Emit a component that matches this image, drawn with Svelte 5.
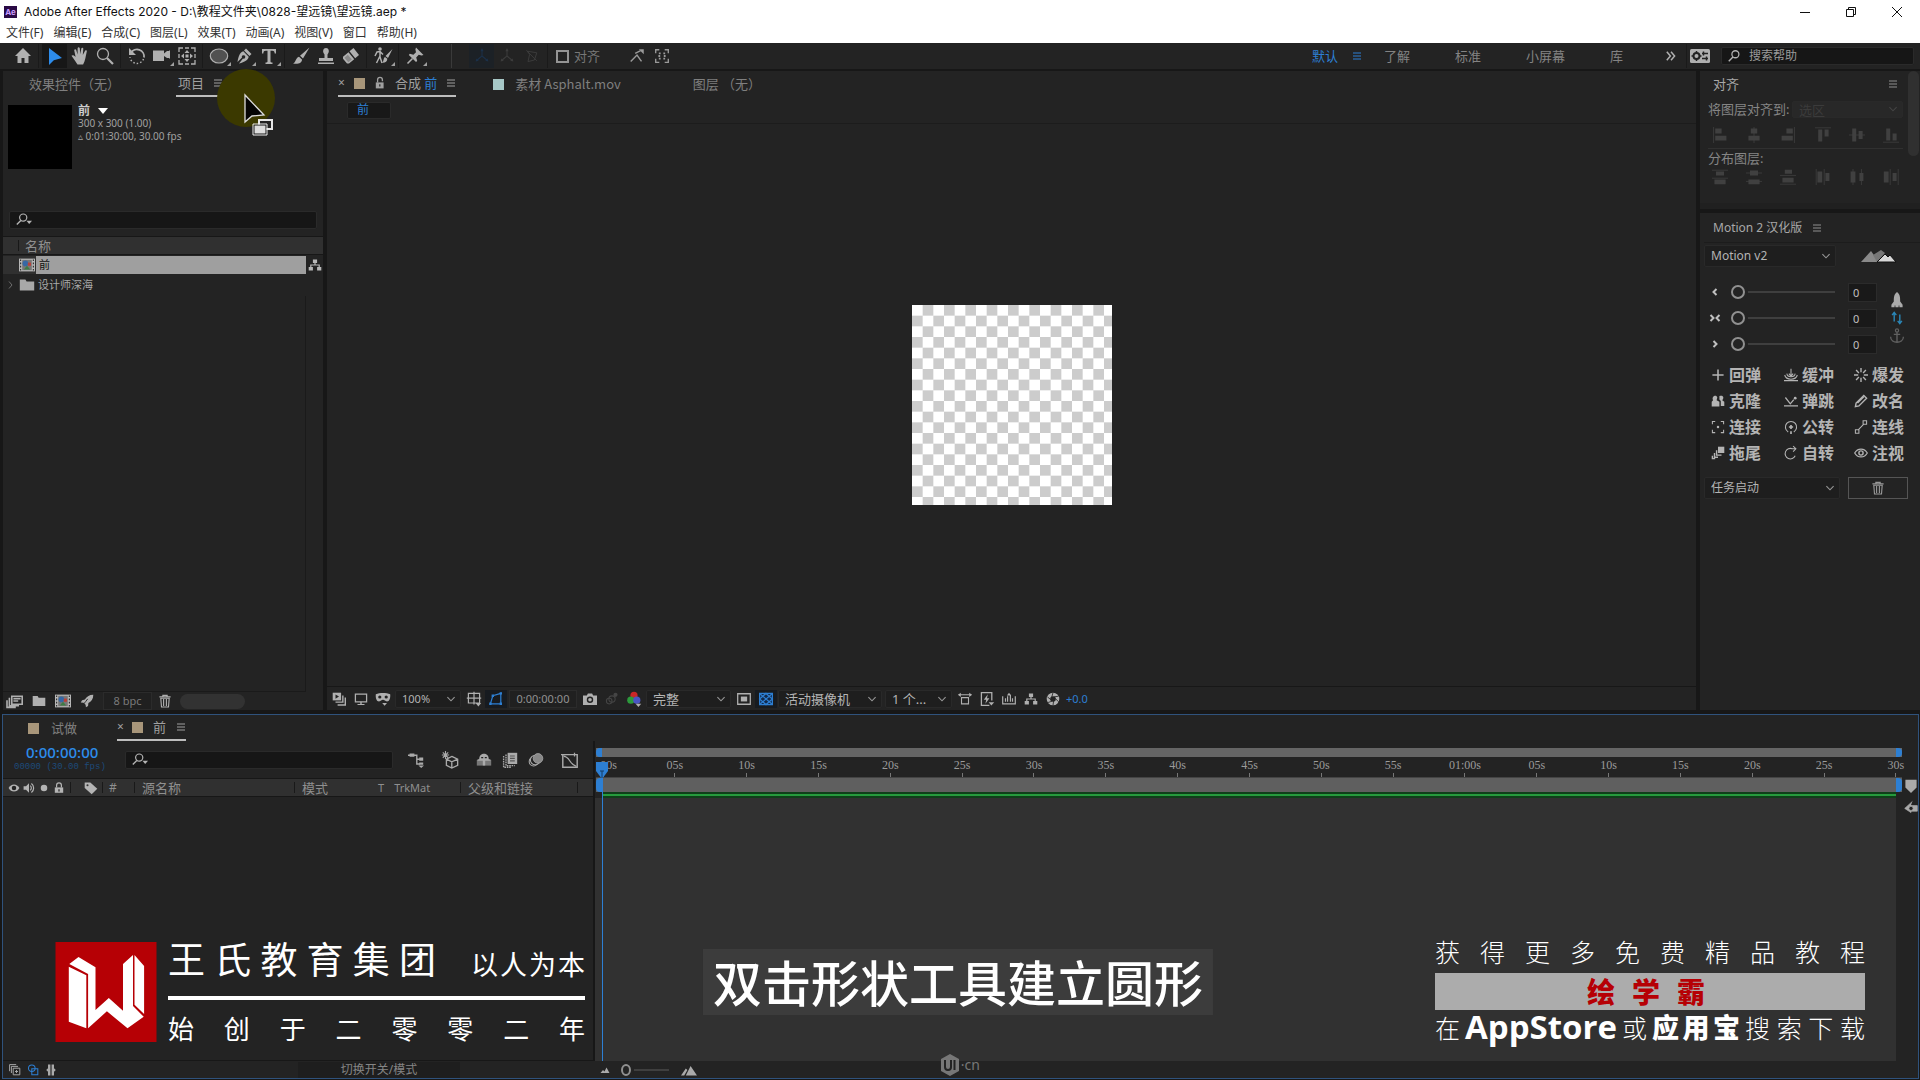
<script>
  const icons = {
    home: '<path d="M10 2 2 10h2.500v7h4v-5h3v5h4v-7H18z" fill="currentColor"/>',
    arrow: '<path d="M4 2v17l4.800-4.800L17 12z" fill="currentColor"/>',
    hand: '<path d="M7.500 18.500C5.500 15.500 3.500 12.500 1.500 9.800c.8-1.200 2.500-.8 4.100 1.200L4.200 4.200c.2-1.300 1.700-1.200 2-.1l1.400 4.500V2.200c.2-1.300 1.900-1.300 2.200 0l.5 6 1-5.800c.4-1.200 2-.9 2 .3l-.5 6.300 2.300-4.200c.7-.9 2-.3 1.700.8-.9 3.400-1.500 9.500-3.700 12.900z" fill="currentColor"/>',
    zoom: '<circle cx="8" cy="8" r="5.500" fill="none" stroke="currentColor" stroke-width="1.300"/><path d="m12 12 6 6" stroke="currentColor" stroke-width="2.200"/>',
    rotate: '<path d="M4 7a7 7 0 0 1 13 4.500" fill="none" stroke="currentColor" stroke-width="1.800"/><path d="M2 2v7h7z" fill="currentColor"/><path d="M16.500 13A7 7 0 0 1 3 11" fill="none" stroke="currentColor" stroke-width="1.400" stroke-dasharray="1.500 2"/>',
    camera: '<path d="M1 4.500h11v3l3-2.500h2l1-1v9l-1-1h-2l-3-2v5H1z" fill="currentColor"/>',
    pan: '<path d="M2 6V2h4M8 2h4M14 2h4v4M2 8v4M18 8v4M2 14v4h4M8 18h4M14 18h4v-4" fill="none" stroke="currentColor" stroke-width="1.300"/><path d="m10 4 2.500 3h-5zM10 16l2.500-3h-5zM4 10l3-2.500v5zM16 10l-3-2.500v5zM8.500 8.500h3v3h-3z" fill="currentColor"/>',
    ellipse: '<ellipse cx="10" cy="10" rx="8.700" ry="7" fill="#515151" stroke="currentColor" stroke-width="1.200"/>',
    pen: '<path d="M12 2.500 17.500 8l-2 2-5.500-5.500zM9.300 5.300l5.400 5.400c-.7 3.300-3.700 5.300-9.700 6.800L9 12.500a1.700 1.700 0 1 0-1-1L3.500 16c1-6 2.500-9.500 5.800-10.700z" fill="currentColor"/>',
    type: '<path d="M3 3h14v4.500h-1.300c-.2-2-.8-2.700-2.500-2.700h-1.700v10.700c0 .8.700 1 2 1V18h-7v-1.500c1.300 0 2-.2 2-1V4.800H6.800c-1.700 0-2.300.7-2.500 2.700H3z" fill="currentColor"/>',
    brush: '<path d="M18.500 1.500 12 12.500 9 9.800zM8 10.800l3 2.700c.2 3.500-4 5-9 4 3-.7 2.300-5.500 6-6.700z" fill="currentColor"/>',
    stamp: '<path d="M8.500 8.500C6 5.500 7.200 2 10 2s4 3.500 1.500 6.500V12H17v3H3v-3h5.500zM2 16.500h16V18H2z" fill="currentColor"/>',
    eraser: '<path d="M12.500 2 18 9l-3.800 3.300-5.700-7zM7.500 6.200l5.700 7L8 17.500H6L2 12.800v-2z" fill="currentColor"/><path d="m3.500 11.800 3.800 4.500 3.500-2.900-4-4.700z" fill="#888"/>',
    roto: '<circle cx="7" cy="3" r="1.800" fill="currentColor"/><path d="M7 5v6l2 6M7 10l-3.500 7M2 10l2-4 3-.5 3 3" fill="none" stroke="currentColor" stroke-width="1.500"/><path d="M19.500 3 15 12l-2.500-2zM12 11l2.300 1.800c0 3-2 4.200-5.300 4 2-1 1-4.500 3-5.800z" fill="currentColor"/>',
    pin: '<path d="m11 1.500 7.500 7.500-2 .6-2.800-.8-2.500 2.600 1 3.600-1.200 1L3.800 9l1-1.200 3.600 1L11 6.200l-.6-2.800z" fill="currentColor"/><path d="m7.500 12.500-5 5" stroke="currentColor" stroke-width="1.600"/>',
    axis: '<path d="M10 2v8l-6 5M10 10l6 5" fill="none" stroke="currentColor" stroke-width="1.300"/><path d="m10 0 2 4H8zM2 17l1-4 3 3zM18 17l-1-4-3 3z" fill="currentColor"/>',
    axis3: '<path d="m4 4 12 2-3 9-8 2 2-9zM3 3l13 13" fill="none" stroke="currentColor" stroke-width="1.200"/>',
    snap: '<path d="m3 16 7-7 5 7M8 7l6-3" fill="none" stroke="currentColor" stroke-width="1.600"/><path d="M12 2.500h5.500V8z" fill="currentColor"/>',
    snapbox: '<path d="M3 7V3h4M13 3h4v4M3 13v4h4M13 17h4v-4" fill="none" stroke="currentColor" stroke-width="1.500"/><path d="M6.500 6h2v2h-2zm5 0h2v2h-2zM6.500 12h2v2h-2zm5 0h2v2h-2zM6 9h2v2H6zm6 0h2v2h-2z" fill="currentColor"/>',
    menu: '<path d="M2 4h16M2 10h16M2 16h16" stroke="currentColor" stroke-width="2.200"/>',
    more: '<path d="m3 3 6 7-6 7M10 3l6 7-6 7" fill="none" stroke="currentColor" stroke-width="2.500"/>',
    workspace: '<rect x="0" y="3" width="20" height="14" rx="1.500" fill="currentColor"/><circle cx="6.500" cy="10" r="3" fill="none" stroke="#232323" stroke-width="2"/><path d="M6.500 5v2M6.500 13v2M1.500 10h2M9.500 10h2M12 7.500h6M12 12.500h6" stroke="#232323" stroke-width="1.500"/><path d="M13.500 5.500v4M16.500 10.500v4" stroke="#232323" stroke-width="1.500"/>',
    find: '<circle cx="12" cy="7.500" r="5" fill="none" stroke="currentColor" stroke-width="1.800"/><path d="m8.500 11.500-6 6" stroke="currentColor" stroke-width="2"/>',
    findDrop: '<circle cx="9" cy="7" r="4.500" fill="none" stroke="currentColor" stroke-width="1.500"/><path d="m6 10.500-5 5" stroke="currentColor" stroke-width="1.800"/><path d="M13 11h7l-3.500 4z" fill="currentColor"/>',
    lock: '<path d="M3 9h13v10H3z" fill="currentColor"/><path d="M6 9V4.500a4 4 0 0 1 8 0V7" fill="none" stroke="currentColor" stroke-width="2.200"/><path d="M8.700 12h2v4h-2z" fill="#232323"/>',
    locked: '<path d="M3 9h14v9H3z" fill="currentColor"/><path d="M6 9V5.500a4 4 0 0 1 8 0V9" fill="none" stroke="currentColor" stroke-width="2"/><path d="M9 12h2v4H9z" fill="#232323"/>',
    comp: '<path d="M0 2h20v16H0z" fill="#b7b7b7"/><path d="M2 3v14M18 3v14" stroke="#333" stroke-width="1.500" stroke-dasharray="2 2"/><path d="M4 3.500h12v13H4z" fill="#777"/><circle cx="8" cy="8" r="3.500" fill="#3668a5"/><path d="M11 7h4v4h-4z" fill="#b8403a"/><path d="m10 11 4 4.500H6z" fill="#3d7c45"/>',
    folder: '<path d="M1 3h7l1.500 2.500H19V17H1z" fill="currentColor"/>',
    tree: '<path d="M7 2h6v5H7zM1 13h6v5H1zM13 13h6v5h-6z" fill="currentColor"/><path d="M10 6v4M4 14v-4h12v4" fill="none" stroke="currentColor" stroke-width="1.700"/>',
    chev: '<path d="m4 7 6 6 6-6" fill="none" stroke="currentColor" stroke-width="1.800"/>',
    chevR: '<path d="m6 3 6 7-6 7" fill="none" stroke="currentColor" stroke-width="1.800"/>',
    interpret: '<path d="M6 4h13v10H6z" fill="none" stroke="currentColor" stroke-width="2"/><path d="M3 6v10h12M0 9v9h11" fill="none" stroke="currentColor" stroke-width="2"/><path d="M8 7h9M8 10h6" stroke="currentColor" stroke-width="2"/>',
    rocket: '<path d="M19 1c-6 0-10 3-12 7l-4 1-2 3 4 .5 3 3L8.500 19l3-2 .5-4c4-2 7-6 7-12z" fill="currentColor"/><path d="m2 18 6-7 3-4" stroke="#232323" fill="none" stroke-width="1.300"/>',
    trash: '<path d="M2 4h16M7 4V2h6v2" fill="none" stroke="currentColor" stroke-width="1.800"/><path d="M4 6h12l-1 12.500H5zM8 7v10M12 7v10" fill="none" stroke="currentColor" stroke-width="1.600"/>',
    play: '<path d="M1 1h12v11H1z" fill="currentColor"/><path d="M5 3.500v6l5-3z" fill="#232323"/><path d="M15.500 5v9.500H5M19 8v10.500H8" fill="none" stroke="currentColor" stroke-width="2"/>',
    monitor: '<path d="M2 3h16v11H2z" fill="none" stroke="currentColor" stroke-width="1.800"/><path d="M9 14h2v3h4v1.500H5V17h4z" fill="currentColor"/>',
    mask: '<path d="M1 4c5-2 13-2 18 0 .5 5-1 9-4 9-2.500 0-3-2-5-2s-2.500 2-5 2c-3 0-4.500-4-4-9z" fill="currentColor"/><circle cx="6" cy="7.500" r="2" fill="#232323"/><circle cx="14" cy="7.500" r="2" fill="#232323"/><path d="M9 15h6l-3 3.500z" fill="currentColor"/>',
    grid: '<path d="M3 3h14v12H3zM10 1v16M1 9h18" fill="none" stroke="currentColor" stroke-width="1.500"/><path d="M12 15h7l-3.500 4.500z" fill="currentColor"/>',
    shape: '<path d="M3 16 6 6l10-3v13z" fill="none" stroke="currentColor" stroke-width="1.500"/><path d="M1.500 14.500h3v3h-3zM4.500 4.500h3v3h-3zM14.500 1.500h3v3h-3zM14.500 14.500h3v3h-3z" fill="currentColor"/>',
    photo: '<path d="M0 5h5.500L7 2h6l1.500 3H20v13.500H0z" fill="currentColor"/><circle cx="10" cy="11" r="3.600" fill="none" stroke="#232323" stroke-width="2"/>',
    rings: '<circle cx="6" cy="13" r="4" fill="none" stroke="currentColor" stroke-width="1.500"/><circle cx="10" cy="10" r="4.500" fill="none" stroke="currentColor" stroke-width="1.500"/><circle cx="15" cy="4" r="3" fill="currentColor"/>',
    rgb: '<circle cx="10" cy="5.500" r="4.500" fill="#c92727"/><circle cx="6" cy="11.500" r="4.500" fill="#2c9a3c"/><circle cx="13.500" cy="11.500" r="4.500" fill="#4a55c4"/><path d="M12 16h7l-3.500 4z" fill="#b0b0b0"/>',
    roi: '<path d="M1 2.500h18v15H1z" fill="none" stroke="currentColor" stroke-width="1.800"/><path d="M5.500 6.500h9v7h-9z" fill="currentColor"/>',
    alpha: '<path d="M2 3h16v14H2z" fill="#12294a" stroke="currentColor" stroke-width="1.500"/><path d="m2 3 16 14M18 3 2 17M10 3l8 7-8 7-8-7z" fill="none" stroke="currentColor" stroke-width="1.600"/>',
    aspect: '<path d="M1 4h18M5 8h10v9H5z" fill="none" stroke="currentColor" stroke-width="1.600"/><path d="m0 4 4-3v6zM20 4l-4-3v6z" fill="currentColor"/>',
    fast: '<path d="M16 12V2H3v16h10" fill="none" stroke="currentColor" stroke-width="1.600"/><path d="m11 4-5 7h3l-1 5 5-7h-3zM12 14h7l-3.500 4z" fill="currentColor"/>',
    chart: '<path d="M1 6v11h18V6M5 9v5M8 6v8M12 4v10M15 9v5" fill="none" stroke="currentColor" stroke-width="1.700"/><path d="m10 1 3 4H7z" fill="currentColor"/>',
    aperture: '<circle cx="10" cy="10" r="6.500" fill="none" stroke="currentColor" stroke-width="5"/><path d="M10 1 8 8M18 6l-7 1M18 14l-5-5M10 19l1-7M3 15l6-2M2 7l5 4" stroke="#232323" stroke-width="1.200"/>',
    flow: '<path d="M0 4h7M7 4h4v11h4M11 9h4" fill="none" stroke="currentColor" stroke-width="1.700"/><path d="M2 2h6v4H2zM14 7h5v4h-5zM14 13h5v3h-5zM13 17h7l-3.500 3z" fill="currentColor"/>',
    cube: '<path d="m12 6 6.500 3v7L12 19l-6-3V9zM6 9l6 3 6.500-3M12 12v7" fill="none" stroke="currentColor" stroke-width="1.500"/><path d="M5 0v9M1 4.500h8M2 1.500l6 6M8 1.500l-6 6" stroke="currentColor" stroke-width="1.200"/>',
    shy: '<path d="M1 10h18v7H1z" fill="#777"/><path d="M4 9c0-9 12-9 12 0h2v2H2V9zM8.500 10h3v7h-3z" fill="currentColor"/><path d="M6.500 7h2.500M11 7h2.500" stroke="#232323" stroke-width="1.500"/>',
    blend: '<path d="M7 1h12v14H7z" fill="currentColor"/><path d="M10 5h6M10 8h6M10 11h6" stroke="#555" stroke-width="1.500"/><path d="M5 3v14h11M2 5v14h10" fill="none" stroke="currentColor" stroke-width="1.700" stroke-dasharray="2 1"/>',
    blur: '<circle cx="7" cy="12" r="5.500" fill="none" stroke="currentColor" stroke-width="1.300"/><circle cx="9" cy="10" r="6" fill="#232323" stroke="currentColor" stroke-width="1.300"/><circle cx="12.500" cy="8" r="6" fill="#888" stroke="currentColor"/>',
    graph: '<path d="M2 4h16v14H2z" fill="none" stroke="currentColor" stroke-width="1.600"/><path d="M3 6c7 0 6 9 14 11M0 4h5M15 2v4" fill="none" stroke="currentColor" stroke-width="1.400"/>',
    eye: '<path d="M1 10c4-8 14-8 18 0-4 8-14 8-18 0z" fill="currentColor"/><circle cx="10" cy="10" r="3.800" fill="#232323"/>',
    speaker: '<path d="M1 7h4l5-5v16l-5-5H1z" fill="currentColor"/><path d="M12 6c2.500 2 2.500 6 0 8M14 2.500c5 4 5 11 0 15" fill="none" stroke="currentColor" stroke-width="2"/>',
    dot: '<circle cx="10" cy="10" r="6.500" fill="currentColor"/>',
    tag: '<path d="M1 2h8l10 9-8 8L1 10z" fill="currentColor"/><circle cx="5" cy="6" r="1.500" fill="#333"/>',
    switches: '<path d="M7 7h11v11H7z" fill="none" stroke="currentColor" stroke-width="1.600"/><path d="M4 15V4h11M1 12V1h11M12.500 10v5M10 12.500h5" fill="none" stroke="currentColor" stroke-width="1.600"/>',
    modes: '<circle cx="8" cy="7" r="5.500" fill="none" stroke="currentColor" stroke-width="1.700"/><path d="M8 8h10v10H8z" fill="none" stroke="currentColor" stroke-width="1.700"/>',
    braces: '<path d="M9 1H5v6l-3 3 3 3v6h4zM11 1h4v6l3 3-3 3v6h-4z" fill="currentColor"/>',
    mount: '<path d="m1 16 5-6 3 3 4-8 6 11z" fill="currentColor"/>',
    mountBig: '<path d="m0 17 6-9 2 2-4 7zM6 17 12 5l8 12z" fill="currentColor"/>',
    marker: '<path d="M2 1h16v11l-8 8-8-8z" fill="currentColor"/>',
    tri: '<path d="M12 2 1 12l9 6V7M10 8h9v8h-9z" fill="currentColor" stroke="currentColor"/><circle cx="10" cy="12" r="3" fill="#232323" stroke="currentColor"/>',
    lt: '<path d="m13 4-6 6 6 6" fill="none" stroke="currentColor" stroke-width="4"/>',
    ltgt: '<path d="m1 4 6 6-6 6M19 4l-6 6 6 6" fill="none" stroke="currentColor" stroke-width="4"/>',
    gt: '<path d="m7 4 6 6-6 6" fill="none" stroke="currentColor" stroke-width="4"/>',
    plus: '<path d="M10 2v16M2 10h16" stroke="currentColor" stroke-width="2.200"/>',
    bounce: '<path d="M0 18h20M1 10c2 8 16 8 18 0M4 8c1 6 11 6 12 0" fill="none" stroke="currentColor" stroke-width="1.500"/><path d="M10 1v10M7 8l3 4 3-4" fill="none" stroke="currentColor" stroke-width="1.500"/>',
    burst: '<path d="M10 0v6M10 14v6M0 10h6M14 10h6M3 3l4 4M13 13l4 4M17 3l-4 4M7 13l-4 4" stroke="currentColor" stroke-width="2"/>',
    clone: '<path d="M3 9C0 3 8 0 9 5l-1 4 4 2v7H1v-7zM12 3c6-2 7 3 4 6l3 2v6h-5v-7l-2-2z" fill="currentColor"/>',
    hop: '<path d="M0 17h20M2 5l7 9 5-6" fill="none" stroke="currentColor" stroke-width="1.800"/><circle cx="16" cy="6" r="2" fill="currentColor"/>',
    pencil: '<path d="m2 18 1-5L14 2l4 4L7 17zM5 13l9-9" fill="none" stroke="currentColor" stroke-width="2"/>',
    link: '<path d="M2 6V2h4M14 2h4v4M2 14v4h4M14 18h4v-4" fill="none" stroke="currentColor" stroke-width="1.500"/><circle cx="10" cy="10" r="1.800" fill="currentColor"/>',
    orbit: '<path d="M6 17a8 8 0 1 1 8 0" fill="none" stroke="currentColor" stroke-width="1.600"/><path d="M10 7v6M7 10h6M10 16v4" stroke="currentColor" stroke-width="2.400"/>',
    wire: '<path d="M2 14h5v5H2zM13 1h5v5h-5zM6 14l8-8" fill="none" stroke="currentColor" stroke-width="1.500"/>',
    trail: '<path d="M10 1h9v9h-9z" fill="currentColor"/><path d="M8 6v7h7M5 10v6h5M2 14v4h4" fill="none" stroke="currentColor" stroke-width="2"/>',
    spin: '<path d="M16 14A7.500 7.500 0 1 1 12 4h4M13 0l4 4-4 4" fill="none" stroke="currentColor" stroke-width="1.500"/>',
    look: '<path d="M1 10c4-7.500 14-7.500 18 0-4 7.500-14 7.500-18 0z" fill="none" stroke="currentColor" stroke-width="1.700"/><circle cx="10" cy="10" r="3" fill="none" stroke="currentColor" stroke-width="2"/>',
    ship: '<path d="M10 0c4 3 4 7 4 12l3 4v3h-4v-2h-1v2H8v-2H7v2H3v-3l3-4C6 7 6 3 10 0z" fill="currentColor"/>',
    swap: '<path d="M6 15V3M3 6l3-4 3 4M14 5v12M11 14l3 4 3-4" fill="none" stroke="currentColor" stroke-width="2"/>',
    anchor: '<circle cx="10" cy="3" r="2" fill="none" stroke="currentColor" stroke-width="1.500"/><path d="M10 5v13M6 8h8M2 11c0 9 16 9 16 0" fill="none" stroke="currentColor" stroke-width="1.700"/>',
    aL: '<path d="M2 0v20" stroke="currentColor"/><path d="M4 2h8v6H4zM4 11h14v6H4z" fill="currentColor"/>',
    aC: '<path d="M10 0v20" stroke="currentColor"/><path d="M6 2h8v6H6zM3 11h14v6H3z" fill="currentColor"/>',
    aR: '<path d="M18 0v20" stroke="currentColor"/><path d="M8 2h8v6H8zM2 11h14v6H2z" fill="currentColor"/>',
    aT: '<path d="M0 1h20" stroke="currentColor"/><path d="M4 3h5v15H4zM12 3h5v9h-5z" fill="currentColor"/>',
    aM: '<path d="M0 10h20" stroke="currentColor"/><path d="M4 2h5v16H4zM12 5h5v10h-5z" fill="currentColor"/>',
    aB: '<path d="M0 19h20" stroke="currentColor"/><path d="M4 2h5v15H4zM12 8h5v9h-5z" fill="currentColor"/>',
    dT: '<path d="M0 1.500h20M0 11.500h20" stroke="currentColor"/><path d="M5 3h10v5H5zM3 13h14v6H3z" fill="currentColor"/>',
    dC: '<path d="M0 5h20M0 15.500h20" stroke="currentColor"/><path d="M5 2h10v6H5zM3 13h14v6H3z" fill="currentColor"/>',
    dB: '<path d="M0 8h20M0 19h20" stroke="currentColor"/><path d="M6 1h9v5H6zM3 11h14v6H3z" fill="currentColor"/>',
    hL: '<path d="M1.500 0v20M11.500 0v20" stroke="currentColor"/><path d="M3 3h6v14H3zM13 5h5v10h-5z" fill="currentColor"/>',
    hC: '<path d="M5 0v20M15.500 0v20" stroke="currentColor"/><path d="M2 3h6v14H2zM13 5h5v10h-5z" fill="currentColor"/>',
    hR: '<path d="M9 0v20M19 0v20" stroke="currentColor"/><path d="M1 3h6v14H1zM12 5h5v10h-5z" fill="currentColor"/>'
  };

  const toolGroups = [
    [['home', '主页']],
    [['arrow', '选取', 'on'], ['hand', '手形'], ['zoom', '缩放']],
    [['rotate', '旋转'], ['camera', '摄像机', 'more'], ['pan', '锚点']],
    [['ellipse', '椭圆', 'more'], ['pen', '钢笔', 'more'], ['type', '文字', 'more']],
    [['brush', '画笔'], ['stamp', '图章'], ['eraser', '橡皮擦']],
    [['roto', '笔刷', 'more']],
    [['pin', '操控点', 'more']]
  ];
  const menus = ['文件(F)', '编辑(E)', '合成(C)', '图层(L)', '效果(T)', '动画(A)', '视图(V)', '窗口', '帮助(H)'];
  const ticks = [':00s', '05s', '10s', '15s', '20s', '25s', '30s', '35s', '40s', '45s', '50s', '55s', '01:00s', '05s', '10s', '15s', '20s', '25s', '30s'];
  const motions = [
    ['plus', '回弹'], ['bounce', '缓冲'], ['burst', '爆发'],
    ['clone', '克隆'], ['hop', '弹跳'], ['pencil', '改名'],
    ['link', '连接'], ['orbit', '公转'], ['wire', '连线'],
    ['trail', '拖尾'], ['spin', '自转'], ['look', '注视']
  ];
</script>

{#snippet icon(name, size = 16)}
  <svg class="ic s{size}" viewBox="0 0 20 20" aria-hidden="true">{@html icons[name]}</svg>
{/snippet}

{#snippet drop(cls, label, value)}
  <span class="drop {cls}">
    <select aria-label={label}><option>{value}</option></select>
    {@render icon('chev', 12)}
  </span>
{/snippet}

<div class="app">
  <header class="title">
    <span class="ae">Ae</span>
    <span class="name">Adobe After Effects 2020 - D:\教程文件夹\0828-望远镜\望远镜.aep *</span>
    <div class="win">
      <button aria-label="最小化"><svg class="ic s12" viewBox="0 0 12 12"><path d="M1 6.500h10" stroke="#111" /></svg></button>
      <button aria-label="还原"><svg class="ic s12" viewBox="0 0 12 12"><path d="M1.500 3.500h7v7h-7zM3.500 3V1.500h7v7H9" fill="none" stroke="#111" /></svg></button>
      <button aria-label="关闭"><svg class="ic s12" viewBox="0 0 12 12"><path d="m1 1 10 10M11 1 1 11" stroke="#111" /></svg></button>
    </div>
  </header>

  <nav class="menus">
    {#each menus as m}<button>{m}</button>{/each}
  </nav>

  <div class="tools">
    {#each toolGroups as group, i}
      {#if i}<i class="sep"></i>{/if}
      {#each group as [name, label, state]}
        <button class="tool {state ?? ''}" aria-label={label}>{@render icon(name, 20)}</button>
      {/each}
    {/each}
    <i class="sep far"></i>
    <div class="axes">
      <button class="tool axon" aria-label="本地轴">{@render icon('axis', 16)}</button>
      <button class="tool" aria-label="世界轴">{@render icon('axis', 16)}</button>
      <button class="tool" aria-label="视图轴">{@render icon('axis3', 16)}</button>
    </div>
    <i class="sep"></i>
    <label class="snap"><input type="checkbox" />对齐</label>
    <button class="tool dimmer" aria-label="边缘对齐">{@render icon('snap', 18)}</button>
    <button class="tool dimmer" aria-label="特征对齐">{@render icon('snapbox', 18)}</button>
    <div class="spaces">
      <button class="active">默认</button>
      <button class="active burger" aria-label="工作区菜单">{@render icon('menu', 10)}</button>
      <button>了解</button><button>标准</button><button>小屏幕</button><button>库</button>
    </div>
    <button class="tool" aria-label="更多">{@render icon('more', 12)}</button>
    <i class="sep"></i>
    <button class="tool wide" aria-label="工作区设置">{@render icon('workspace', 20)}</button>
    <label class="search help">{@render icon('find', 14)}<input placeholder="搜索帮助" aria-label="搜索帮助" /></label>
  </div>

  <main class="panels">
    <section class="panel project">
      <div class="tabs">
        <button class="tab first">效果控件（无）</button>
        <button class="tab current">项目 {@render icon('menu', 10)}</button>
      </div>
      <div class="info">
        <div class="thumb"></div>
        <div class="meta">
          <b>前 <svg class="ic s10" viewBox="0 0 10 10"><path d="M0 2h10L5 8z" fill="#fff" /></svg></b>
          <span>300 x 300 (1.00)</span>
          <span>▵ 0:01:30:00, 30.00 fps</span>
        </div>
      </div>
      <label class="search find">{@render icon('findDrop', 16)}<input aria-label="搜索项目" /></label>
      <div class="colhead"><i></i>名称</div>
      <ul class="items">
        <li class="picked">{@render icon('comp', 16)}<span>前</span><em>{@render icon('tree', 14)}</em></li>
        <li><button class="twist" aria-label="展开">{@render icon('chevR', 10)}</button>{@render icon('folder', 16)}<span>设计师深海</span></li>
      </ul>
      <div class="void"></div>
      <div class="foot">
        <button aria-label="解释素材">{@render icon('interpret', 16)}</button>
        <button aria-label="新建文件夹">{@render icon('folder', 14)}</button>
        <button aria-label="新建合成">{@render icon('comp', 16)}</button>
        <button aria-label="项目设置">{@render icon('rocket', 14)}</button>
        <button class="bpc">8 bpc</button>
        <button aria-label="删除">{@render icon('trash', 14)}</button>
        <i class="bar"></i>
      </div>
    </section>

    <section class="panel viewer">
      <div class="tabs">
        <button class="tab comp current"><small>×</small><i class="sq"></i>{@render icon('lock', 12)}<span>合成 <a href="#comp">前</a></span>{@render icon('menu', 10)}</button>
        <button class="tab footage"><i class="sq pale"></i>素材 Asphalt.mov</button>
        <button class="tab layer">图层 （无）</button>
      </div>
      <div class="crumbs"><button>前</button></div>
      <div class="stage">
        <svg class="canvas" viewBox="0 0 300 300">
          <defs><pattern id="chk" width="32" height="32" patternUnits="userSpaceOnUse"><path d="M0 0h32v32H0z" fill="#fff" /><path d="M16 0h16v16H16zM0 16h16v16H0z" fill="#ccc" /></pattern></defs>
          <path d="M0 0h300v300H0z" fill="url(#chk)" />
        </svg>
      </div>
      <div class="vbar">
        <button aria-label="始终预览">{@render icon('play', 14)}</button>
        <button aria-label="主查看器">{@render icon('monitor', 14)}</button>
        <button aria-label="虚拟现实">{@render icon('mask', 16)}</button>
        {@render drop('w66', '放大率', '100%')}
        <button aria-label="网格">{@render icon('grid', 16)}</button>
        <button class="lit" aria-label="蒙版">{@render icon('shape', 16)}</button>
        <button class="code">0:00:00:00</button>
        <button aria-label="快照">{@render icon('photo', 14)}</button>
        <button class="faint" aria-label="显示快照">{@render icon('rings', 14)}</button>
        <button aria-label="通道">{@render icon('rgb', 16)}</button>
        {@render drop('w85', '分辨率', '完整')}
        <button aria-label="目标区域">{@render icon('roi', 14)}</button>
        <button class="lit" aria-label="透明网格">{@render icon('alpha', 16)}</button>
        {@render drop('w104', '3D 视图', '活动摄像机')}
        {@render drop('w67', '视图布局', '1 个...')}
        <button aria-label="像素长宽比">{@render icon('aspect', 14)}</button>
        <button aria-label="快速预览">{@render icon('fast', 16)}</button>
        <button aria-label="时间轴">{@render icon('chart', 14)}</button>
        <button aria-label="流程图">{@render icon('tree', 14)}</button>
        <button aria-label="重置曝光">{@render icon('aperture', 14)}</button>
        <a href="#exposure">+0.0</a>
      </div>
    </section>

    <aside class="side">
      <section class="panel align">
        <div class="ahead"><h2>对齐</h2><button aria-label="面板菜单">{@render icon('menu', 10)}</button></div>
        <div class="to"><label for="target">将图层对齐到:</label><span class="drop off"><select id="target" disabled><option>选区</option></select>{@render icon('chev', 12)}</span></div>
        <div class="set">{#each ['aL', 'aC', 'aR', 'aT', 'aM', 'aB'] as n}<button aria-label="对齐">{@render icon(n, 16)}</button>{/each}</div>
        <div class="dist">分布图层:</div>
        <div class="set low">{#each ['dT', 'dC', 'dB', 'hL', 'hC', 'hR'] as n}<button aria-label="分布">{@render icon(n, 16)}</button>{/each}</div>
        <i class="scroll"></i>
      </section>
      <section class="panel motion">
        <div class="mhead"><h2>Motion 2 汉化版</h2><button aria-label="面板菜单">{@render icon('menu', 10)}</button></div>
        <div class="mtop">
          {@render drop('tall', '脚本', 'Motion v2')}
          <svg class="peaks" viewBox="0 0 36 14"><path d="M0 13 10 2l8 11z" fill="#8a8a8a" /><path d="m12 6 8-5 4 3-8 9z" fill="#777" /><path d="m16 13 8-8 3 3 2-2 6 7z" fill="#d8d8d8" stroke="#111" /></svg>
        </div>
        <div class="ease">
          <div class="rows">
            {#each ['lt', 'ltgt', 'gt'] as n}
              <div class="row">{@render icon(n, 10)}<input type="range" value="0" aria-label="缓动" /><input class="num" value="0" aria-label="数值" /></div>
            {/each}
          </div>
          <div class="mini">
            <button aria-label="火箭">{@render icon('ship', 16)}</button>
            <button class="swap" aria-label="交换">{@render icon('swap', 14)}</button>
            <button class="anch" aria-label="锚点">{@render icon('anchor', 16)}</button>
          </div>
        </div>
        <div class="acts">
          {#each motions as [n, t]}<button>{@render icon(n, 14)}{t}</button>{/each}
        </div>
        <div class="mend">
          {@render drop('tall', '任务', '任务启动')}
          <button aria-label="删除任务">{@render icon('trash', 14)}</button>
        </div>
      </section>
    </aside>
  </main>

  <section class="timeline">
    <div class="tabs">
      <button class="tab t1"><i class="sq"></i>试做</button>
      <button class="tab t2 current"><small>×</small><i class="sq"></i><span>前</span>{@render icon('menu', 10)}</button>
    </div>
    <div class="split">
      <div class="layers">
        <div class="ctrl">
          <div class="clock"><b>0:00:00:00</b><span>00000 (30.00 fps)</span></div>
          <label class="search">{@render icon('findDrop', 16)}<input aria-label="搜索图层" /></label>
          <div class="pair">
            <button aria-label="微型流程图">{@render icon('flow', 16)}</button>
            <button aria-label="草图 3D">{@render icon('cube', 18)}</button>
          </div>
          <div class="trio">
            <button aria-label="隐藏图层">{@render icon('shy', 16)}</button>
            <button aria-label="帧混合">{@render icon('blend', 16)}</button>
            <button aria-label="运动模糊">{@render icon('blur', 16)}</button>
          </div>
          <button aria-label="图表编辑器">{@render icon('graph', 18)}</button>
        </div>
        <div class="heads">
          <span class="h sw">{@render icon('eye', 12)}{@render icon('speaker', 12)}{@render icon('dot', 10)}{@render icon('locked', 12)}</span>
          <span class="h tg">{@render icon('tag', 14)}</span>
          <span class="h no">#</span>
          <span class="h src">源名称</span>
          <span class="h mode">模式</span>
          <span class="h trk"><span>T</span>TrkMat</span>
          <span class="h par">父级和链接</span>
        </div>
        <div class="empty"></div>
      </div>
      <div class="time">
        <div class="navi"><i></i><i></i></div>
        <div class="ruler">{#each ticks as t}<span class="tick"><b>{t}</b></span>{/each}</div>
        <div class="work"><i></i><i></i></div>
        <div class="cache"></div>
        <div class="body"></div>
        <svg class="head" viewBox="0 0 12 18"><path d="M0 0h12v9l-6 8-6-8z" fill="#2d7fd3" /><path d="M4 9h4M6 9v7" stroke="#153a63" /></svg>
        <i class="needle"></i>
        <div class="marks">{@render icon('marker', 16)}{@render icon('tri', 16)}</div>
      </div>
    </div>
    <div class="tfoot">
      <button aria-label="图层开关">{@render icon('switches', 12)}</button>
      <button class="blue" aria-label="转换控制">{@render icon('modes', 12)}</button>
      <button aria-label="入点出点">{@render icon('braces', 12)}</button>
      <button class="toggle">切换开关/模式</button>
      {@render icon('mount', 10)}
      <input type="range" value="0" aria-label="时间缩放" />
      {@render icon('mountBig', 16)}
    </div>
  </section>

  <div class="brand">
    <svg class="logo" viewBox="0 0 101 100"><path d="M0 0h101v100H0z" fill="#b60005" /><path d="M13.800 22 23 15l17 10.300V68l13.300-12 14.200 12.700V22l10-9v51l10.700 10.700L72 86.300 51.400 69.300 32.600 86.300V32zM13.300 24.700l17.500 8.600v53l-17.500-6.600zM79 13l9.600 11v48L79 62.700z" fill="#fff" /></svg>
    <div class="words">
      <div class="upper"><span class="group">王氏教育集团</span><span class="motto">以人为本</span></div>
      <span class="since">始创于二零零二年</span>
    </div>
  </div>
  <div class="caption">双击形状工具建立圆形</div>
  <div class="promo">
    <span class="spread">获得更多免费精品教程</span>
    <strong><span>绘学霸</span></strong>
    <div class="stores"><span>在</span><b class="store">AppStore</b><span>或</span><b class="bao">应用宝</b><span class="dl">搜索下载</span></div>
  </div>
  <div class="mark"><svg viewBox="0 0 18 22"><path d="m9 0 9 5v12l-9 5-9-5V5z" fill="#777" /><path d="M4 6v7q0 3 3 3t3-3V6M13.500 6v10" fill="none" stroke="#232323" stroke-width="2" /></svg>·cn</div>
  <svg class="cursor" viewBox="0 0 60 60"><circle cx="30" cy="30" r="29" fill="#3b3900" /><path d="M29 27v27l7-6 12-1z" fill="#050505" stroke="#ddd" stroke-width="1.300" /><path d="M43 52h13v9H43z" fill="#222" stroke="#e6e6e6" stroke-width="2" /><path d="M38 57h12v9H38z" fill="#ddd" stroke="#111" /><path d="M37 56h14v11H37z" fill="none" stroke="#eee" /></svg>
</div>

<style>
  :global(body) { background: #171717; }
  :global(*) { box-sizing: border-box; }
  .app {
    position: relative; display: flex; flex-direction: column; min-height: 100vh; overflow: hidden;
    font: 13px/16px "Noto Sans", "Noto Sans CJK SC", sans-serif; color: #8f8f8f; background: #171717;
  }
  button, input, select { font: inherit; color: inherit; background: none; border: 0; padding: 0; margin: 0; outline: 0; }
  button { display: inline-flex; align-items: center; justify-content: center; white-space: nowrap; }
  h2 { margin: 0; font-size: 13px; font-weight: 400; color: #a8a8a8; }
  a { color: #2d7fd3; text-decoration: none; }
  i { display: block; flex: none; }
  .ic { flex: none; display: block; width: 16px; height: 16px; overflow: visible; }
  .s10 { width: 10px; height: 10px; }
  .s12 { width: 12px; height: 12px; }
  .s14 { width: 14px; height: 14px; }
  .s18 { width: 18px; height: 18px; }
  .s20 { width: 20px; height: 20px; }

  .title { display: flex; align-items: center; height: 23px; background: #fff; color: #111; font: 12px/16px Inter, "Noto Sans CJK SC", sans-serif; padding-left: 4px; }
  .ae { width: 13px; height: 12px; background: #2a0a45; color: #c79bff; font-size: 8px; line-height: 12px; font-weight: 700; text-align: center; margin-right: 7px; }
  .win { margin-left: auto; display: flex; }
  .win button { width: 46px; height: 22px; }
  .menus { display: flex; gap: 10px; height: 20px; padding-left: 6px; background: #fff; color: #333; font-size: 12px; }

  .tools { display: flex; align-items: center; height: 26px; margin-bottom: 2px; padding: 0 6px 0 10px; background: #232323; color: #b0b0b0; }
  .tool { position: relative; width: 25px; height: 24px; }
  .tool.on { color: #2d8ceb; background: #171717; }
  .tool.more::after { content: ""; position: absolute; right: 0; bottom: 2px; border: 2px solid transparent; border-right-color: #a0a0a0; border-bottom-color: #a0a0a0; }
  .tool.wide { width: 31px; justify-content: flex-start; }
  .dimmer { color: #9a9a9a; }
  .sep { width: 1px; height: 24px; margin: 0 3px; background: #1a1a1a; }
  .sep.far { margin: 0 17px 0 24px; background: #3a3a3a; }
  .axes { display: flex; color: #3c3c3c; }
  .axon { color: #1b3049; background: #1c2126; }
  .snap { display: flex; align-items: center; gap: 5px; margin: 0 24px 0 5px; color: #777; }
  .snap input { appearance: none; width: 13px; height: 13px; border: 2px solid #949494; }
  .spaces { display: flex; align-items: center; margin-left: auto; margin-right: 35px; color: #838383; }
  .spaces button { margin-right: 45px; }
  .spaces button:last-child { margin-right: 0; }
  .spaces .active { color: #2d7fd3; margin-right: 14px; }
  .spaces .burger { margin-right: 22px; }
  .search { display: flex; align-items: center; gap: 8px; height: 18px; background: #161616; border: 1px solid #2a2a2a; border-radius: 2px; color: #b4b4b4; }
  .search input { flex: 1; min-width: 0; width: 0; }
  .search input::placeholder { color: #9a9a9a; opacity: 1; }
  .help { width: 193px; padding-left: 5px; font-size: 12px; }

  .panels { flex: 641 1 0; display: grid; grid-template-columns: 320px minmax(0, 1fr) 220px; column-gap: 4px; padding-left: 3px; }
  .panel { background: #232323; min-width: 0; }
  .project, .viewer { display: flex; flex-direction: column; }
  .tabs { display: flex; height: 26px; flex: none; }
  .tab { align-items: center; gap: 12px; height: 26px; color: #7f7f7f; }
  .tab.current { border-bottom: 2px solid #bdbdbd; color: #a0a0a0; }
  .tab small { font-size: 12px; }
  .sq { width: 11px; height: 11px; background: #a8967a; }
  .sq.pale { background: #a7c8c7; }
  .first { margin-left: 26px; margin-right: 56px; }
  .project .current { padding: 0 0 0 2px; gap: 9px; }
  .info { display: flex; gap: 6px; margin: 8px 0 0 5px; }
  .thumb { width: 64px; height: 64px; background: #000; }
  .meta { display: flex; flex-direction: column; font-size: 10px; line-height: 13px; color: #a0a0a0; }
  .meta b { display: flex; gap: 8px; align-items: center; font-size: 12px; color: #ccc; line-height: 12px; }
  .find { margin: 42px 6px 0 6px; padding-left: 6px; }
  .colhead { display: flex; align-items: center; gap: 6px; height: 19px; margin-top: 7px; padding-left: 15px; background: #303030; border-block: 1px solid #171717; }
  .colhead i { width: 1px; height: 11px; background: #181818; }
  .items { list-style: none; margin: 1px 0 0; padding: 0; font-size: 11px; color: #a8a8a8; }
  .items li { display: flex; align-items: center; height: 18px; padding-left: 16px; margin-bottom: 2px; }
  .items .picked { background: #303030; }
  .picked span { flex: 1; align-self: stretch; background: #9f9f9f; color: #111; padding-left: 3px; line-height: 18px; margin-left: 1px; }
  .picked em { display: flex; justify-content: center; width: 17px; color: #b8b8b8; background: #232323; align-self: stretch; align-items: center; }
  .items li:not(.picked) span { margin-left: 3px; }
  .twist { width: 12px; margin: 0 2px 0 -14px; color: #777; }
  .void { flex: 1; width: 303px; border: 1px solid #1a1a1a; border-width: 0 1px 1px 0; }
  .foot { display: flex; align-items: center; height: 18px; color: #b0b0b0; font-size: 11px; }
  .foot button { width: 24px; height: 18px; }
  .foot .bpc { width: 49px; background: #202020; border: 1px solid #2b2b2b; color: #7a7a7a; margin: 0 1px 0 4px; }
  .bar { width: 65px; height: 15px; border-radius: 8px; background: #323232; margin-left: 3px; }

  .comp { margin-left: 11px; gap: 9px; }
  .footage { margin-left: 37px; gap: 11px; font-family: "Noto Sans CJK SC", sans-serif; }
  .layer { margin-left: 72px; }
  .crumbs { height: 27px; padding: 4px 0 0 20px; border-bottom: 1px solid #1c1c1c; }
  .crumbs button { width: 44px; height: 17px; background: #181818; border: 1px solid #2a2a2a; border-radius: 2px; color: #2d7fd3; padding-right: 12px; font-size: 12px; }
  .stage { flex: 1; display: flex; align-items: center; justify-content: center; border-bottom: 1px solid #171717; }
  .canvas { width: 200px; height: 200px; }
  .vbar { display: flex; align-items: center; height: 23px; padding-left: 1px; color: #b0b0b0; font-size: 11px; }
  .vbar button { width: 22px; height: 18px; }
  .vbar .lit { color: #2d7fd3; background: #171b20; }
  .vbar .faint { color: #454545; }
  .vbar .code { width: 68px; border: 1px solid #2b2b2b; background: #202020; margin: 0 2px; color: #929292; }
  .vbar a { margin-left: 2px; }
  .drop { position: relative; display: inline-flex; align-items: center; height: 18px; background: #1e1e1e; border: 1px solid #292929; border-radius: 2px; color: #b4b4b4; }
  .drop select { appearance: none; width: 100%; height: 100%; padding-left: 6px; }
  .drop .ic { position: absolute; right: 3px; pointer-events: none; color: #9a9a9a; }
  .vbar .drop { margin: 0 2px 0 1px; font-size: 13px; }
  .w66 { width: 66px; }
  .vbar .w66 { font-size: 11px; }
  .w85 { width: 85px; }
  .w104 { width: 104px; }
  .w67 { width: 67px; }

  .side { display: flex; flex-direction: column; gap: 4px; }
  .align { position: relative; padding: 0 17px 0 8px; height: 138px; border-bottom: 6px solid #202020; }
  .ahead { display: flex; align-items: center; justify-content: space-between; height: 26px; padding: 0 5px; }
  .to { display: flex; align-items: center; justify-content: space-between; height: 24px; white-space: nowrap; color: #858585; }
  .drop.off { width: 111px; height: 17px; background: #282828; color: #444; }
  .drop.off .ic { color: #444; }
  .set { display: flex; align-items: center; justify-content: space-between; padding: 0 3px; height: 27px; color: #404040; }
  .set button { width: 18px; }
  .set.low { height: 20px; }
  .dist { border-top: 1px solid #303030; height: 19px; line-height: 18px; color: #858585; }
  .scroll { position: absolute; right: 1px; top: 0; width: 11px; height: 85px; border-radius: 6px; background: #303030; }
  .motion { flex: 1; padding-left: 4px; }
  .mhead { display: flex; align-items: center; gap: 10px; height: 30px; padding-left: 9px; border-bottom: 1px solid #1c1c1c; }
  .mhead h2 { font-size: 12px; }
  .mtop { display: flex; align-items: center; gap: 25px; margin-top: 2px; }
  .tall { width: 132px; height: 22px; font-size: 12px; }
  .peaks { width: 36px; height: 14px; }
  .ease { display: flex; margin-top: 12px; gap: 12px; }
  .rows { width: 173px; }
  .row { display: flex; align-items: center; height: 26px; padding-left: 6px; color: #c0c0c0; }
  .row input[type="range"] { width: 104px; margin: 0 13px 0 11px; }
  .num { width: 29px; height: 19px; background: #191919; border: 1px solid #2b2b2b; padding-left: 4px; font-size: 11px; }
  input[type="range"] { appearance: none; height: 14px; overflow: hidden; background: linear-gradient(#3f3f3f, #3f3f3f) center / 100% 2px no-repeat; }
  input[type="range"]::-webkit-slider-thumb { appearance: none; width: 14px; height: 14px; border-radius: 50%; background: #232323; border: 2px solid #909090; box-shadow: 0 0 0 3px #232323; }
  .mini { display: flex; flex-direction: column; align-items: center; justify-content: center; gap: 3px; color: #aaa; }
  .swap { color: #2b87b8; }
  .anch { color: #606060; }
  .acts { display: grid; grid-template-columns: 73px 70px 70px; margin: 5px 0 0 7px; row-gap: 1px; }
  .acts button { justify-content: flex-start; gap: 4px; height: 25px; font-size: 16px; font-weight: 700; color: #b4b4b4; }
  .mend { display: flex; gap: 8px; margin-top: 12px; }
  .mend :global(.tall) { width: 136px; }
  .mend button { width: 60px; border: 1px solid #555; color: #999; }

  .timeline { flex: 364 1 0; display: flex; flex-direction: column; margin: 4px 1px 1px 2px; background: #232323; border: 1px solid #2f527c; }
  .t1 { margin-left: 25px; }
  .t2 { margin-left: 40px; gap: 10px; }
  .t2 small { margin-right: -2px; }
  .split { flex: 1; display: flex; }
  .layers { width: 592px; display: flex; flex-direction: column; border-right: 2px solid #171717; }
  .ctrl { display: flex; align-items: center; height: 37px; color: #aaa; }
  .clock { width: 122px; padding-left: 11px; line-height: 15px; }
  .clock b { display: block; font-size: 15px; font-weight: 500; color: #2d8ceb; padding-left: 12px; }
  .clock span { font: 9px/14px "Liberation Mono", monospace; color: #1d4a7a; display: block; white-space: nowrap; }
  .ctrl .search { width: 268px; padding-left: 6px; }
  .pair { display: flex; gap: 17px; margin: 0 17px 0 15px; }
  .trio { display: flex; gap: 10px; margin-right: 17px; }
  .heads { display: flex; align-items: center; height: 19px; background: #303030; border-block: 1px solid #171717; }
  .h { display: flex; align-items: center; height: 11px; border-right: 1px solid #191919; }
  .sw { width: 68px; gap: 3px; padding-left: 5px; color: #b4b4b4; }
  .sw .ic:nth-child(3) { margin: 0 1px; }
  .tg { width: 32px; padding-left: 13px; color: #b4b4b4; }
  .no { width: 32px; padding-left: 6px; font-size: 12px; }
  .src { width: 160px; padding-left: 7px; }
  .mode { width: 72px; padding-left: 7px; border: 0; }
  .trk { width: 94px; padding-left: 11px; gap: 10px; font-size: 11px; }
  .par { width: 117px; padding-left: 7px; white-space: nowrap; }
  .empty { flex: 1; border-bottom: 1px solid #171717; }
  .time { position: relative; flex: 1; min-width: 0; display: flex; flex-direction: column; padding-top: 7px; }
  .navi, .work { display: flex; justify-content: space-between; height: 9px; margin: 0 16px 0 1px; background: #656565; }
  .navi i { width: 6px; background: #2d7fd3; border-radius: 4px 0 0 4px; }
  .work { height: 15px; background: #5f5f5f; border-top: 1px solid #444; }
  .work i { width: 6px; background: #2d7fd3; border-radius: 4px 0 0 4px; }
  .navi i:last-child, .work i:last-child { border-radius: 0 4px 4px 0; }
  .ruler { display: flex; justify-content: space-between; height: 20px; padding: 0 22px 0 8px; }
  .tick { width: 0; display: flex; flex-direction: column; align-items: center; justify-content: space-between; }
  .tick b { font: 12px/16px "Liberation Serif", serif; color: #9b9b9b; }
  .tick::after { content: ""; width: 1px; height: 4px; background: #777; }
  .tick:first-child { align-items: flex-start; }
  .tick:first-child b { margin-left: -6px; }
  .cache { height: 6px; margin: 0 22px 0 7px; background: #269a3d; border-block: 2px solid #0f3f1a; }
  .body { flex: 1; margin-right: 22px; background: #313131; }
  .head { position: absolute; left: 1px; top: 21px; width: 12px; height: 18px; }
  .needle { position: absolute; left: 7px; top: 37px; bottom: 0; width: 1px; background: #2d7fd3; }
  .marks { position: absolute; right: 0; top: 37px; display: flex; flex-direction: column; gap: 5px; color: #aaa; }
  .marks .ic { width: 14px; }
  .tfoot { display: flex; align-items: center; height: 17px; padding-left: 3px; color: #aaa; }
  .tfoot button { width: 18px; height: 16px; }
  .tfoot .blue { color: #2d7fd3; }
  .tfoot .toggle { width: 162px; margin: 0 140px 0 238px; background: #1e1e1e; color: #858585; font-size: 12px; }
  .tfoot input { width: 48px; height: 12px; margin: 0 12px 0 11px; }
  .tfoot input::-webkit-slider-thumb { width: 10px; height: 12px; }

  .brand { position: absolute; left: 55px; bottom: 38px; display: flex; gap: 11px; color: #fff; font-family: "Noto Sans CJK SC", sans-serif; }
  .logo { width: 102px; height: 100px; }
  .words { width: 417px; display: flex; flex-direction: column; justify-content: space-between; }
  .upper { display: flex; align-items: center; justify-content: space-between; border-bottom: 4px solid #fff; height: 58px; padding-bottom: 21px; }
  .group, .motto, .since, .spread, .bao, .dl, .promo strong span { display: block; text-align: justify; text-align-last: justify; white-space: nowrap; }
  .group { width: 268px; font-size: 37px; line-height: 37px; }
  .motto { width: 114px; font-size: 27px; line-height: 27px; padding-top: 9px; }
  .since { font-size: 26px; line-height: 28px; }
  .caption { position: absolute; left: 50%; bottom: 65px; transform: translateX(-50%); margin-left: -2px; padding: 0 10px; height: 66px; font: 500 49px/64px "Noto Sans CJK SC", sans-serif; color: #fff; background: #3c3c3c; white-space: nowrap; }
  .promo { position: absolute; right: 55px; bottom: 32px; width: 430px; color: #fff; font: 300 25px/28px "Noto Sans CJK SC", sans-serif; }
  .promo strong { display: flex; justify-content: center; margin: 8px 0 0; padding-right: 8px; background: #acacac; color: #b60005; font-size: 28px; font-weight: 900; line-height: 37px; }
  .promo strong span { width: 118px; }
  .stores { display: flex; align-items: center; justify-content: space-between; line-height: 34px; padding-bottom: 4px; }
  .store { font-family: "Open Sans", sans-serif; font-size: 33px; font-weight: 700; }
  .bao { width: 88px; font-size: 27px; font-weight: 900; }
  .dl { width: 120px; }
  .mark { position: absolute; left: 49%; bottom: 4px; display: flex; align-items: center; gap: 2px; color: #777; font-size: 14px; }
  .mark svg { width: 18px; height: 22px; }
  .cursor { position: absolute; left: 216px; top: 68px; width: 60px; height: 60px; overflow: visible; }
</style>
